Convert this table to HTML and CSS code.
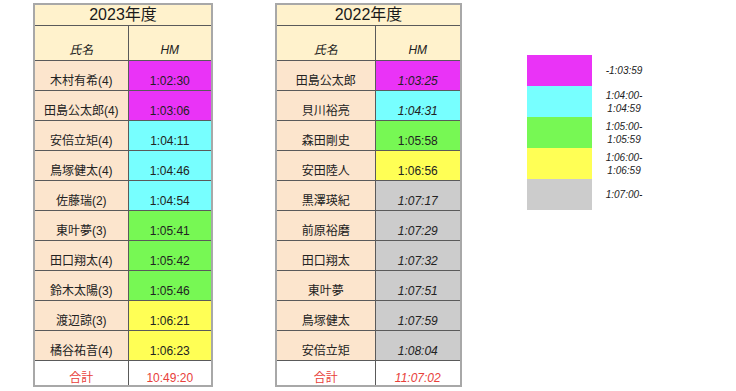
FILE: index.html
```html
<!DOCTYPE html>
<html lang="ja">
<head>
<meta charset="utf-8">
<link rel="stylesheet" href="styles.css">
</head>
<body>
<div class="page">
  <table class="sheet sheet-a">
    <colgroup><col class="c-name-a"><col class="c-time-a"></colgroup>
    <tr class="r-title"><td colspan="2">2023年度</td></tr>
    <tr class="r-head"><td>氏名</td><td>HM</td></tr>
    <tr class="r-data"><td class="name">木村有希(4)</td><td class="t mag">1:02:30</td></tr>
    <tr class="r-data"><td class="name">田島公太郎(4)</td><td class="t mag">1:03:06</td></tr>
    <tr class="r-data"><td class="name">安倍立矩(4)</td><td class="t cya">1:04:11</td></tr>
    <tr class="r-data"><td class="name">鳥塚健太(4)</td><td class="t cya">1:04:46</td></tr>
    <tr class="r-data"><td class="name">佐藤瑞(2)</td><td class="t cya">1:04:54</td></tr>
    <tr class="r-data"><td class="name">東叶夢(3)</td><td class="t grn">1:05:41</td></tr>
    <tr class="r-data"><td class="name">田口翔太(4)</td><td class="t grn">1:05:42</td></tr>
    <tr class="r-data"><td class="name">鈴木太陽(3)</td><td class="t grn">1:05:46</td></tr>
    <tr class="r-data"><td class="name">渡辺諒(3)</td><td class="t yel">1:06:21</td></tr>
    <tr class="r-data"><td class="name">橘谷祐音(4)</td><td class="t yel">1:06:23</td></tr>
    <tr class="r-total"><td>合計</td><td>10:49:20</td></tr>
  </table>

  <table class="sheet sheet-b">
    <colgroup><col class="c-name-b"><col class="c-time-b"></colgroup>
    <tr class="r-title"><td colspan="2">2022年度</td></tr>
    <tr class="r-head"><td>氏名</td><td>HM</td></tr>
    <tr class="r-data"><td class="name">田島公太郎</td><td class="t it mag">1:03:25</td></tr>
    <tr class="r-data"><td class="name">貝川裕亮</td><td class="t it cya">1:04:31</td></tr>
    <tr class="r-data"><td class="name">森田剛史</td><td class="t grn">1:05:58</td></tr>
    <tr class="r-data"><td class="name">安田陸人</td><td class="t yel">1:06:56</td></tr>
    <tr class="r-data"><td class="name">黒澤瑛紀</td><td class="t it gry">1:07:17</td></tr>
    <tr class="r-data"><td class="name">前原裕磨</td><td class="t it gry">1:07:29</td></tr>
    <tr class="r-data"><td class="name">田口翔太</td><td class="t it gry">1:07:32</td></tr>
    <tr class="r-data"><td class="name">東叶夢</td><td class="t it gry">1:07:51</td></tr>
    <tr class="r-data"><td class="name">鳥塚健太</td><td class="t it gry">1:07:59</td></tr>
    <tr class="r-data"><td class="name">安倍立矩</td><td class="t it gry">1:08:04</td></tr>
    <tr class="r-total"><td>合計</td><td class="it">11:07:02</td></tr>
  </table>

  <table class="legend">
    <tr><td class="sw mag"></td><td class="lt">-1:03:59</td></tr>
    <tr><td class="sw cya"></td><td class="lt">1:04:00-<br>1:04:59</td></tr>
    <tr><td class="sw grn"></td><td class="lt">1:05:00-<br>1:05:59</td></tr>
    <tr><td class="sw yel"></td><td class="lt">1:06:00-<br>1:06:59</td></tr>
    <tr><td class="sw gry"></td><td class="lt">1:07:00-</td></tr>
  </table>
</div>
</body>
</html>
```

FILE: styles.css
```css
html, body {
  margin: 0;
  padding: 0;
  background: #ffffff;
}

body {
  font-family: "Liberation Sans", "Noto Sans CJK JP", sans-serif;
  color: #222222;
}

.page {
  display: flex;
  align-items: flex-start;
  padding: 3px 0 0 33px;
}

.sheet {
  border-collapse: collapse;
  table-layout: fixed;
  border: 2px solid #a8a8a8;
  font-size: 12px;
}

.sheet-a { width: 178px; }
.sheet-b { width: 185px; margin-left: 62px; }

.c-name-a { width: 94px; }
.c-time-a { width: 84px; }
.c-name-b { width: 99px; }
.c-time-b { width: 86px; }

.sheet td {
  border: 1px solid #5a5a5a;
  padding: 0 2px;
  text-align: center;
  white-space: nowrap;
}

.r-title td {
  height: 20px;
  background: #fff2cc;
  font-size: 16px;
  line-height: 18px;
  vertical-align: middle;
  color: #1a1a1a;
}

.r-head td {
  height: 31px;
  background: #fff2cc;
  font-style: italic;
  vertical-align: bottom;
  padding-bottom: 3px;
  line-height: 14px;
}

.r-data td {
  height: 30px;
  vertical-align: bottom;
  padding-bottom: 2px;
  line-height: 14px;
  box-sizing: border-box;
}

.r-data td.name {
  background: #fce5cd;
}

.r-total td {
  height: 24px;
  background: #ffffff;
  color: #e8403a;
  vertical-align: bottom;
  padding-bottom: 0;
  line-height: 14px;
}

.it { font-style: italic; }

.mag { background: #ea33f7; }
.cya { background: #77ffff; }
.grn { background: #77f854; }
.yel { background: #ffff55; }
.gry { background: #cccccc; }

.legend {
  border-collapse: collapse;
  margin-left: 65px;
  margin-top: 52px;
  font-size: 10px;
  font-style: italic;
}

.legend td {
  padding: 0;
  height: 31px;
}

.legend .sw {
  width: 65px;
}

.legend .lt {
  width: 64px;
  text-align: center;
  vertical-align: middle;
  line-height: 13px;
  color: #222222;
}
```
